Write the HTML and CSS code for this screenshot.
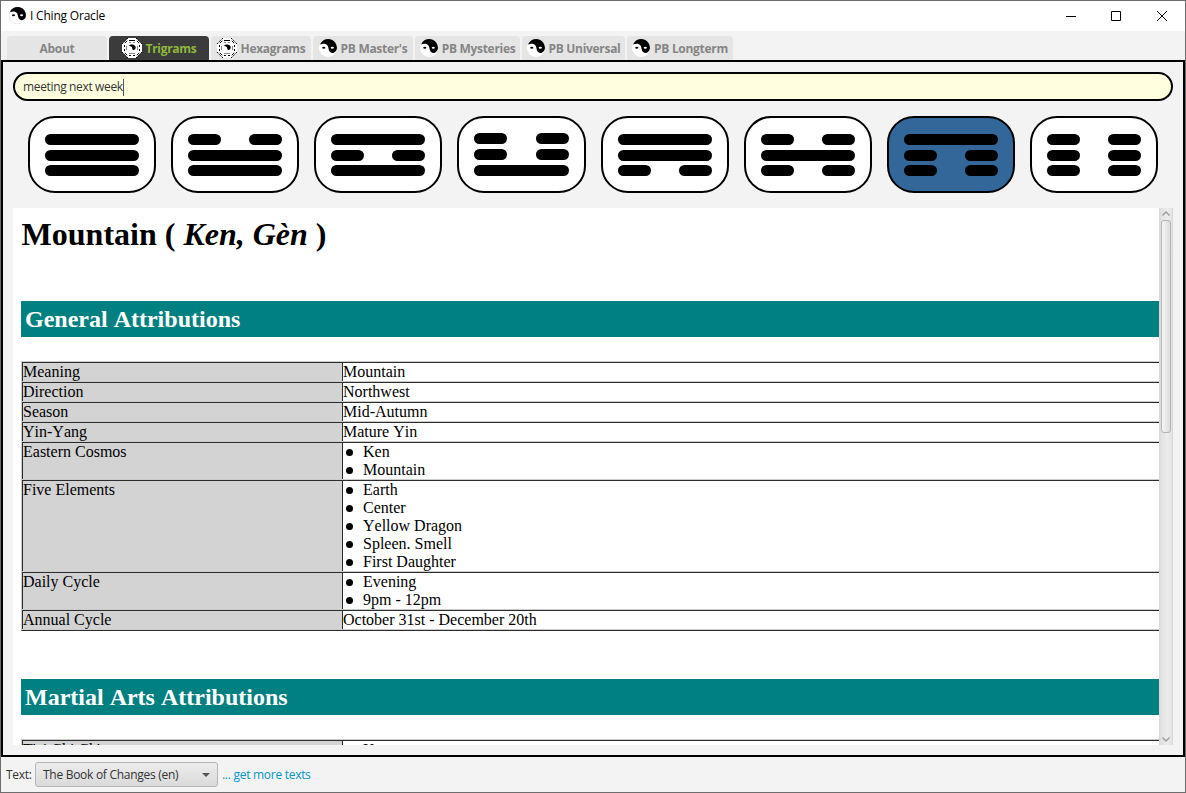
FILE: index.html
```html
<!DOCTYPE html>
<html lang="en">
<head>
<meta charset="utf-8">
<title>I Ching Oracle</title>
<link rel="stylesheet" href="styles.css">
</head>
<body>
<svg class="defs" width="0" height="0">
  <symbol id="yy" viewBox="0 0 18 18">
    <circle cx="9" cy="9" r="9" fill="#fff"/>
    <path d="M1 5.5C4 -1.5 13 -1.5 16.5 4C18.5 7.5 18.5 11 16 13C14 14.8 11 14 10 11.5C9.5 10 9.5 8 8.5 6.5C7 4.3 4 4.2 1 5.5Z" fill="#000"/>
    <ellipse cx="4.8" cy="8.8" rx="1.6" ry="1" fill="#000"/>
    <ellipse cx="13.3" cy="8.8" rx="1.6" ry="1" fill="#fff"/>
  </symbol>
  <symbol id="bagua" viewBox="0 0 20 20">
    <path d="M6 0H14L20 6V14L14 20H6L0 14V6Z" fill="#fff"/>
    <g stroke="#000" stroke-width="1" fill="none">
      <path d="M7 2.5H13M7 17.5H9M11 17.5H13M2.5 7V9M2.5 11V13M17.5 7V9M17.5 11V13"/>
      <path d="M2.8 5.2L5.2 2.8M14.8 2.8L17.2 5.2M2.8 14.8L5.2 17.2M14.8 17.2L17.2 14.8"/>
      <path d="M7 4.5H9M11 4.5H13M7 15.5H13M4.5 8V12M15.5 8V12" stroke="#555" stroke-width=".7"/>
      <path d="M0 6L6 0M14 0L20 6M0 14L6 20M14 20L20 14" stroke-dasharray="2 1.2"/>
    </g>
    <path d="M6.6 8C8 5.6 13.6 5.8 13.7 9.3C13.7 12.3 10.6 12.8 10.3 10.4C9.8 8.6 8.6 7.8 6.6 8Z"/>
  </symbol>
</svg>
<div class="window">
  <header class="titlebar">
    <svg class="app-icon"><use href="#yy"/></svg>
    <span class="app-title">I Ching Oracle</span>
    <svg class="controls" width="102" height="12" viewBox="0 0 102 12"><path d="M0 6.5H10M45.5 1.5H54.5V10.5H45.5ZM91 1L101 11M101 1L91 11" fill="none" stroke="#000"/></svg>
  </header>
  <nav class="tabs">
    <div class="tab"><span>About</span></div>
    <div class="tab active"><svg class="bagua"><use href="#bagua"/></svg><span>Trigrams</span></div>
    <div class="tab"><svg class="bagua"><use href="#bagua"/></svg><span>Hexagrams</span></div>
    <div class="tab"><svg class="yy"><use href="#yy"/></svg><span>PB Master's</span></div>
    <div class="tab mysteries"><svg class="yy"><use href="#yy"/></svg><span>PB Mysteries</span></div>
    <div class="tab universal"><svg class="yy"><use href="#yy"/></svg><span>PB Universal</span></div>
    <div class="tab longterm"><svg class="yy"><use href="#yy"/></svg><span>PB Longterm</span></div>
  </nav>
  <main class="pane">
    <div class="question"><span>meeting next week</span><i class="caret"></i></div>
    <div class="trigrams">
      <div class="trigram"><b></b><b></b><b></b></div>
      <div class="trigram"><b class="yin"></b><b></b><b></b></div>
      <div class="trigram"><b></b><b class="yin"></b><b></b></div>
      <div class="trigram lake"><b class="yin"></b><b class="yin"></b><b></b></div>
      <div class="trigram"><b></b><b></b><b class="yin"></b></div>
      <div class="trigram"><b class="yin"></b><b></b><b class="yin"></b></div>
      <div class="trigram selected"><b></b><b class="yin"></b><b class="yin"></b></div>
      <div class="trigram"><b class="yin"></b><b class="yin"></b><b class="yin"></b></div>
    </div>
    <div class="viewer">
      <article class="doc">
        <h1>Mountain ( <em>Ken, Gèn</em> )</h1>
        <h2>General Attributions</h2>
        <div class="table">
          <div class="row"><div class="key">Meaning</div><div class="val">Mountain</div></div>
          <div class="row"><div class="key">Direction</div><div class="val">Northwest</div></div>
          <div class="row"><div class="key">Season</div><div class="val">Mid-Autumn</div></div>
          <div class="row"><div class="key">Yin-Yang</div><div class="val">Mature Yin</div></div>
          <div class="row"><div class="key">Eastern Cosmos</div><div class="val"><ul><li>Ken</li><li>Mountain</li></ul></div></div>
          <div class="row"><div class="key">Five Elements</div><div class="val"><ul><li>Earth</li><li>Center</li><li>Yellow Dragon</li><li>Spleen. Smell</li><li>First Daughter</li></ul></div></div>
          <div class="row"><div class="key">Daily Cycle</div><div class="val"><ul><li>Evening</li><li>9pm - 12pm</li></ul></div></div>
          <div class="row"><div class="key">Annual Cycle</div><div class="val">October 31st - December 20th</div></div>
        </div>
        <h2 class="second">Martial Arts Attributions</h2>
        <div class="table">
          <div class="row"><div class="key">T'ai Chi Ch'uan</div><div class="val"><ul><li>Kao</li></ul></div></div>
        </div>
      </article>
      <div class="scrollbar">
        <svg width="8" height="5" viewBox="0 0 8 5"><path d="M.5 4.5L4 1L7.5 4.5" fill="none" stroke="#999" stroke-width="1.3"/></svg>
        <div class="thumb"></div>
        <svg class="down" width="8" height="5" viewBox="0 0 8 5"><path d="M.5 .5L4 4L7.5 .5" fill="none" stroke="#999" stroke-width="1.3"/></svg>
      </div>
    </div>
  </main>
  <footer class="footer">
    <span class="label">Text:</span>
    <div class="select"><span>The Book of Changes (en)</span><svg width="8" height="4" viewBox="0 0 8 4"><path d="M0 0H8L4 4Z" fill="#555"/></svg></div>
    <a class="more">... get more texts</a>
  </footer>
</div>
</body>
</html>
```
FILE: styles.css
```css
* { box-sizing: border-box; }
body { margin: 0; font: 12px/16px "Open Sans", "Noto Sans", sans-serif; color: #333; }
.defs { position: absolute; }
.window { width: 1186px; height: 793px; border: 1px solid #6d6d6d; background: #f3f3f3; display: flex; flex-direction: column; overflow: hidden; }
.titlebar { height: 30px; flex: none; background: #fff; display: flex; align-items: center; padding: 0 18px 0 8px; }
.app-icon { width: 17px; height: 17px; margin: 0 4px 2px 0; filter: drop-shadow(0 0 .5px #999); }
.app-title { color: #000; letter-spacing: -.2px; }
.controls { margin-left: auto; margin-right: -1px; }

.tabs { height: 29px; flex: none; display: flex; gap: 2px; padding: 5px 0 0 6px; }
.tab { width: 100px; height: 24px; border-radius: 4px 4px 0 0; background: #e5e5e5; color: #858585; font-weight: 700; letter-spacing: -.3px; display: flex; align-items: center; justify-content: center; gap: 4px; white-space: nowrap; }
.tab span { padding-top: 2px; }
.tab.active { background: #3b3b3b; color: #8fb83c; }
.mysteries { width: 105px; }
.universal { width: 103px; }
.longterm { width: 106px; }
.bagua { width: 20px; height: 20px; flex: none; }
.yy { width: 18px; height: 18px; flex: none; margin-bottom: 1px; }

.pane { height: 697px; flex: none; border: 2px solid #000; padding: 10px; display: flex; flex-direction: column; }
.question { height: 29px; flex: none; border: 2px solid #000; border-radius: 15px; background: #ffffe0; display: flex; align-items: center; padding: 1px 0 0 8px; letter-spacing: -.35px; }
.caret { width: 1px; height: 17px; background: #555; }
.trigrams { display: flex; justify-content: space-between; padding: 15px 15px; height: 107px; flex: none; }
.trigram { width: 128px; height: 77px; border: 2px solid #000; border-radius: 27px; background: #fff; padding: 16px 15px 15px; display: flex; flex-direction: column; justify-content: space-between; }
.trigram b { height: 11px; border-radius: 6px; background: #000; display: block; }
.trigram b.yin { background: none; display: flex; justify-content: space-between; }
.yin::before, .yin::after { content: ""; width: 33px; height: 11px; border-radius: 6px; background: #000; }
.trigram.lake { width: 129px; padding-top: 15px; }
.trigram.selected { background: #336699; }

.viewer { height: 537px; flex: none; display: flex; background: #fff; overflow: hidden; }
.doc { flex: 1; height: 537px; overflow: hidden; padding-left: 8px; font: 16px/18px "Liberation Serif", "Times New Roman", serif; font-kerning: none; color: #000; }
h1 { margin: 8px 0 0 .6px; height: 85px; font-size: 32px; line-height: 36px; }
h2 { margin: 0 0 24px; height: 36px; padding-left: 4px; background: #008080; color: #fff; font-size: 24px; line-height: 37px; }
h2.second { margin-top: 48px; }
.table { border-top: 1px solid #ccc; border-left: 1px solid #ccc; border-bottom: 1px solid #2c2c2c; }
.row { display: flex; border-top: 1px solid #2c2c2c; border-bottom: 1px solid #ccc; }
.key { width: 320px; background: #d3d3d3; border-left: 1px solid #2c2c2c; }
.val { flex: 1; border-left: 1px solid #2c2c2c; min-width: 0; }
ul { margin: 0; padding: 0; list-style: none; }
li { display: flex; align-items: center; height: 18px; padding-left: 3px; }
li::before { content: ""; width: 7px; height: 7px; border-radius: 50%; background: #000; margin: 1px 10px 0 0; }

.scrollbar { width: 14px; background: linear-gradient(90deg, #d5d5d5, #e2e2e2 2px, #ececec 60%, #e6e6e6 12px, #d5d5d5); display: flex; flex-direction: column; align-items: center; padding: 3px 0; }
.thumb { width: 10px; height: 213px; margin-top: 4px; border: 1px solid #b4b4b4; border-radius: 3px; background: linear-gradient(90deg, #f6f6f6, #dcdcdc); }
.down { margin-top: auto; }

.footer { flex: 1; display: flex; align-items: center; padding: 0 0 0 5px; letter-spacing: -.28px; }
.label { width: 26px; }
.select { width: 183px; height: 25px; margin: 0 4px 0 3px; border: 1px solid #b5b5b5; border-radius: 3px; background: linear-gradient(#ececec, #dadada); display: flex; align-items: center; justify-content: space-between; padding: 0 7px; }
.more { color: #0096c9; }
```
